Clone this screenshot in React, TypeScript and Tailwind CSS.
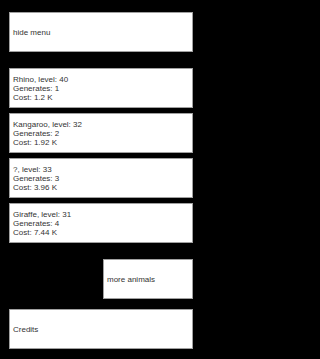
const animals = [
  { name: "Rhino", level: 40, generates: 1, cost: "1.2 K" },
  { name: "Kangaroo", level: 32, generates: 2, cost: "1.92 K" },
  { name: "?", level: 33, generates: 3, cost: "3.96 K" },
  { name: "Giraffe", level: 31, generates: 4, cost: "7.44 K" },
];

function Panel({ children, className = "" }: { children: React.ReactNode; className?: string }) {
  return (
    <div className={`h-[40px] bg-white border border-[#a0a0a0] flex flex-col justify-center px-[3px] ${className}`}>
      {children}
    </div>
  );
}

export default function App() {
  return (
    <div className="min-h-screen bg-black">
      <div
        className="w-[202px] h-[359px] bg-black px-[9px] pt-[12px] text-[8px] leading-[9px] text-[#333333]"
        style={{ fontFamily: '"Liberation Sans", Arial, sans-serif' }}
      >
        <Panel>hide menu</Panel>

        <div className="mt-[16px] flex flex-col gap-[5px]">
          {animals.map((a) => (
            <Panel key={a.name}>
              <div>{a.name}, level: {a.level}</div>
              <div>Generates: {a.generates}</div>
              <div>Cost: {a.cost}</div>
            </Panel>
          ))}
        </div>

        <div className="mt-[16px] flex justify-end">
          <Panel className="w-[90px]">more animals</Panel>
        </div>

        <Panel className="mt-[10px]">Credits</Panel>
      </div>
    </div>
  );
}
